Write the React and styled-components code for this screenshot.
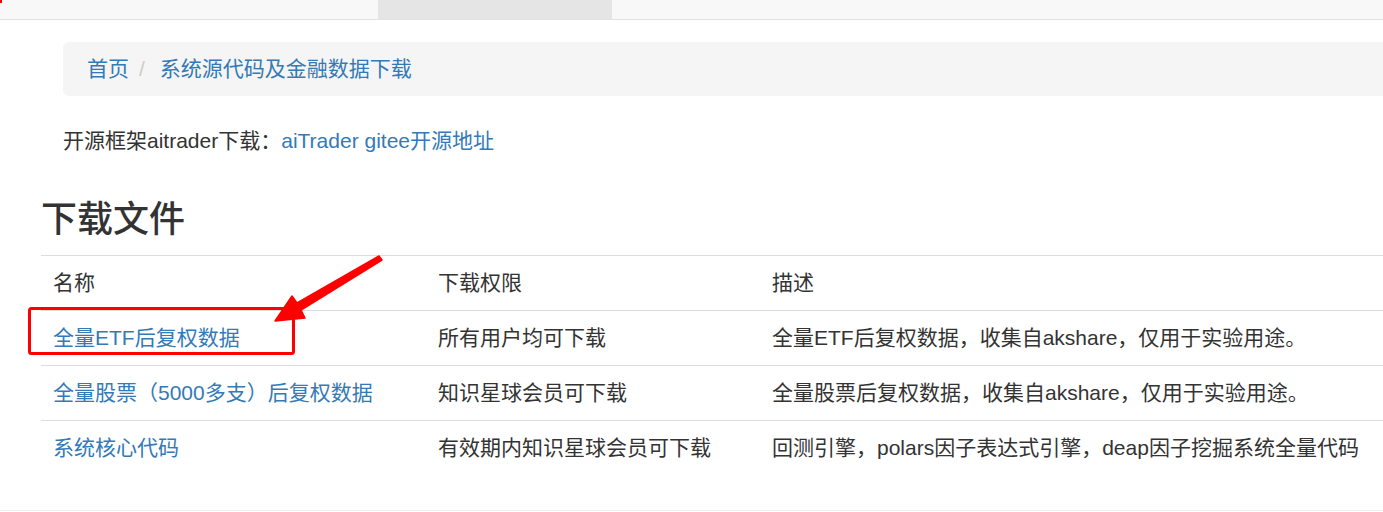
import React from 'react';
import styled, { createGlobalStyle } from 'styled-components';

const GlobalStyle = createGlobalStyle`
  html, body {
    margin: 0;
    padding: 0;
    background: #fff;
    overflow: hidden;
  }
  body {
    font-family: "Liberation Sans", "Noto Sans CJK SC", sans-serif;
    font-size: 21px;
    line-height: 30px;
    color: #333;
  }
  *, *::before, *::after {
    box-sizing: border-box;
  }
`;

const Page = styled.div`
  position: relative;
  width: 1383px;
  height: 512px;
  overflow: hidden;
`;

const Navbar = styled.div`
  height: 20px;
  background: #f8f8f8;
  border-bottom: 1px solid #e2e2e2;
  display: flex;
`;

const NavTab = styled.div`
  width: ${({ w }) => w}px;
  background: ${({ active }) => (active ? '#e5e5e5' : 'transparent')};
`;

const Main = styled.div`
  padding-left: 41px;
`;

const Indent = styled.div`
  padding-left: 22px;
`;

const Breadcrumb = styled.ol`
  list-style: none;
  margin: 22px 0 30px;
  padding: 12px 24px;
  width: 1400px;
  background: #f5f5f5;
  border-radius: 6px;
  display: flex;
`;

const Crumb = styled.li`
  color: #337ab7;
  & + &::before {
    content: '/\\00a0';
    color: #ccc;
    padding: 0 9px 0 10px;
  }
`;

const Intro = styled.p`
  margin: 0;
`;

const Link = styled.a`
  color: #337ab7;
  text-decoration: none;
`;

const Heading = styled.h3`
  margin: 44px 0 15px;
  font-size: 36px;
  font-weight: 500;
  line-height: 40px;
  color: #333;
`;

const Table = styled.table`
  width: 1420px;
  border-collapse: collapse;
  table-layout: fixed;
`;

const Col = styled.col`
  width: ${({ w }) => (w ? `${w}px` : 'auto')};
`;

const Th = styled.th`
  text-align: left;
  font-weight: normal;
  padding: 12px;
  border-top: 1px solid #ddd;
  line-height: 30px;
`;

const Td = styled.td`
  padding: 12px;
  border-top: 1px solid #ddd;
  line-height: 30px;
  white-space: nowrap;
  color: ${({ link }) => (link ? '#337ab7' : '#333')};
`;

const Footer = styled.div`
  margin-top: 35px;
  border-top: 1px solid #eee;
`;

const Annotation = styled.svg`
  position: absolute;
  left: 0;
  top: 0;
  pointer-events: none;
`;

const rows = [
  ['全量ETF后复权数据', '所有用户均可下载', '全量ETF后复权数据，收集自akshare，仅用于实验用途。'],
  ['全量股票（5000多支）后复权数据', '知识星球会员可下载', '全量股票后复权数据，收集自akshare，仅用于实验用途。'],
  ['系统核心代码', '有效期内知识星球会员可下载', '回测引擎，polars因子表达式引擎，deap因子挖掘系统全量代码'],
];

export default function App() {
  return (
    <>
      <GlobalStyle />
      <Page>
        <Navbar>
          <NavTab w={378} />
          <NavTab w={234} active />
        </Navbar>
        <Main>
          <Indent>
            <Breadcrumb>
              <Crumb>首页</Crumb>
              <Crumb>系统源代码及金融数据下载</Crumb>
            </Breadcrumb>
            <Intro>
              开源框架aitrader下载：<Link href="#">aiTrader gitee开源地址</Link>
            </Intro>
          </Indent>
          <Heading>下载文件</Heading>
          <Table>
            <colgroup>
              <Col w={385} />
              <Col w={334} />
              <Col w={701} />
            </colgroup>
            <thead>
              <tr>
                <Th>名称</Th>
                <Th>下载权限</Th>
                <Th>描述</Th>
              </tr>
            </thead>
            <tbody>
              {rows.map((r, i) => (
                <tr key={i}>
                  <Td link>{r[0]}</Td>
                  <Td>{r[1]}</Td>
                  <Td>{r[2]}</Td>
                </tr>
              ))}
            </tbody>
          </Table>
        </Main>
        <Footer />
        <Annotation width="1383" height="512" viewBox="0 0 1383 512">
          <rect x="0" y="0" width="2" height="3" fill="#f00" />
          <rect x="29.5" y="308.5" width="264" height="45" rx="2" fill="none" stroke="#f00" strokeWidth="3" />
          <polygon
            points="275,321 292,296 297,303 379,256 382,260 301,310 305,318"
            fill="#f00"
            stroke="#f00"
            strokeWidth="1.5"
            strokeLinejoin="round"
          />
        </Annotation>
      </Page>
    </>
  );
}
